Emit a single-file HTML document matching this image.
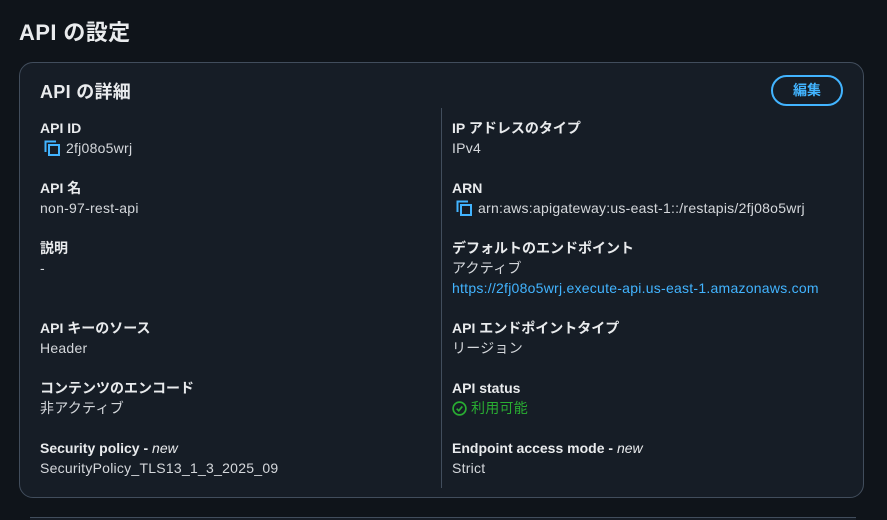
<!DOCTYPE html>
<html><head><meta charset="utf-8"><style>
*{margin:0;padding:0;box-sizing:border-box}
body{width:887px;height:520px;background:#0f141a;font-family:"Liberation Sans","Noto Sans CJK JP",sans-serif;color:#d5d8dc;position:relative;overflow:hidden}
.h1{position:absolute;left:19px;top:15px;font-size:22px;font-weight:bold;color:#e9ebed;letter-spacing:0.4px}
.card{position:absolute;left:19px;top:62px;width:845px;height:436px;background:#161d26;border:1px solid #414d5c;border-radius:14px}
.h2{position:absolute;left:40px;top:78px;font-size:18px;font-weight:bold;color:#e9ebed;letter-spacing:0.3px}
.btn{position:absolute;left:771px;top:75px;width:72px;height:31px;border:2px solid #42b4ff;border-radius:16px;color:#42b4ff;font-size:14px;font-weight:bold;text-align:center;line-height:27px}
.div{position:absolute;left:441px;top:108px;width:1px;height:380px;background:#414d5c}
.l{position:absolute;font-size:14px;font-weight:bold;color:#e9ebed;white-space:nowrap;line-height:18px}
.v{position:absolute;font-size:14px;color:#d5d8dc;white-space:nowrap;line-height:18px;letter-spacing:0.25px}
.lnk{color:#42b4ff}
.g{color:#29ad32}
i{font-weight:normal}
svg{vertical-align:-3px;margin-right:6px}
.bot{position:absolute;left:30px;top:517px;width:826px;height:3px;border-top:1px solid #414d5c;background:#161d26}
</style></head><body>
<div class="h1">API の設定</div>
<div class="card"></div>
<div class="h2">API の詳細</div>
<div class="btn">編集</div>
<div class="div"></div>

<div class="l" style="left:40px;top:119px">API ID</div>
<div class="v" style="left:44px;top:139px"><svg width="16" height="16" viewBox="0 0 16 16"><path d="M1.5 12V1.5H12" fill="none" stroke="#42b4ff" stroke-width="2"/><rect x="5" y="5" width="10" height="10" fill="none" stroke="#42b4ff" stroke-width="2"/></svg>2fj08o5wrj</div>
<div class="l" style="left:40px;top:179px">API 名</div>
<div class="v" style="left:40px;top:199px">non-97-rest-api</div>
<div class="l" style="left:40px;top:239px">説明</div>
<div class="v" style="left:40px;top:259px">-</div>
<div class="l" style="left:40px;top:319px">API キーのソース</div>
<div class="v" style="left:40px;top:339px">Header</div>
<div class="l" style="left:40px;top:379px">コンテンツのエンコード</div>
<div class="v" style="left:40px;top:399px">非アクティブ</div>
<div class="l" style="left:40px;top:439px">Security policy - <i>new</i></div>
<div class="v" style="left:40px;top:459px">SecurityPolicy_TLS13_1_3_2025_09</div>

<div class="l" style="left:452px;top:119px">IP アドレスのタイプ</div>
<div class="v" style="left:452px;top:139px">IPv4</div>
<div class="l" style="left:452px;top:179px">ARN</div>
<div class="v" style="left:456px;top:199px"><svg width="16" height="16" viewBox="0 0 16 16"><path d="M1.5 12V1.5H12" fill="none" stroke="#42b4ff" stroke-width="2"/><rect x="5" y="5" width="10" height="10" fill="none" stroke="#42b4ff" stroke-width="2"/></svg>arn:aws:apigateway:us-east-1::/restapis/2fj08o5wrj</div>
<div class="l" style="left:452px;top:239px">デフォルトのエンドポイント</div>
<div class="v" style="left:452px;top:259px">アクティブ</div>
<div class="v lnk" style="left:452px;top:279px">https://2fj08o5wrj.execute-api.us-east-1.amazonaws.com</div>
<div class="l" style="left:452px;top:319px">API エンドポイントタイプ</div>
<div class="v" style="left:452px;top:339px">リージョン</div>
<div class="l" style="left:452px;top:379px">API status</div>
<div class="v g" style="left:452px;top:399px"><svg width="15" height="15" viewBox="0 0 16 16" style="margin-right:4px"><circle cx="8" cy="8" r="6.8" fill="none" stroke="#29ad32" stroke-width="1.8"/><path d="M5 8.2l2.2 2.2L11 5.8" fill="none" stroke="#29ad32" stroke-width="1.8"/></svg>利用可能</div>
<div class="l" style="left:452px;top:439px">Endpoint access mode - <i>new</i></div>
<div class="v" style="left:452px;top:459px">Strict</div>
<div class="bot"></div>
</body></html>
